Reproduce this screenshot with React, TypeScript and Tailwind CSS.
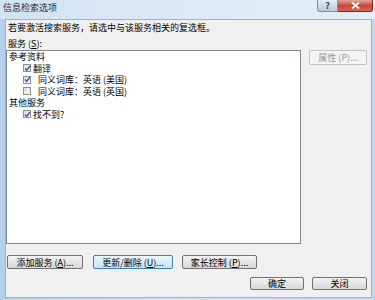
import React from "react";

const font = { fontFamily: '"Noto Sans CJK SC", "Noto Sans", sans-serif' };

function Check({ checked }: { checked: boolean }) {
  return (
    <span className="relative flex h-[8px] w-[8px] shrink-0 items-center justify-center border border-[#8f8f8f] bg-gradient-to-br from-[#dcdcdc] to-[#f7f7f7]">
      {checked && (
        <svg width="7" height="7" viewBox="0 0 7 7" className="absolute">
          <path d="M1 3.6 L2.8 5.4 L6 1" fill="none" stroke="#3a5aa5" strokeWidth="1.4" />
        </svg>
      )}
    </span>
  );
}

function Btn({
  children,
  w,
  variant = "normal",
}: {
  children: React.ReactNode;
  w: string;
  variant?: "normal" | "focus" | "disabled";
}) {
  const base = "flex h-full items-center justify-center rounded-[2px] border text-[9px] leading-none";
  const look =
    variant === "focus"
      ? "border-[#3c7fb1] bg-gradient-to-b from-[#eaf6fd] to-[#c4e5f6] text-black"
      : variant === "disabled"
      ? "border-[#c0c4c7] bg-[#f4f4f4] text-[#9a9a9a]"
      : "border-[#707070] bg-gradient-to-b from-[#f2f2f2] to-[#d8d8d8] text-black";
  return <div className={`${base} ${look} ${w}`}>{children}</div>;
}

export default function App() {
  return (
    <div
      style={font}
      className="flex h-[300px] w-[375px] flex-col overflow-hidden bg-gradient-to-r from-[#b5cfec] via-[#cfe0f3] to-[#c2d8f0]"
    >
      {/* title bar */}
      <div className="flex h-[19px] shrink-0 items-start justify-between bg-gradient-to-r from-[#d3e3f4] to-[#e4eef8]">
        <div className="pl-[3px] pt-[2px] text-[9px] leading-[11px] text-[#1c2a3c]">信息检索选项</div>
        <div className="mr-[2px] flex h-[12px]">
          <div className="flex w-[21px] items-center justify-center rounded-bl-[3px] border border-t-0 border-[#7d8ea3] bg-gradient-to-b from-[#e8eef5] to-[#b9c9dc] text-[9px] font-bold leading-none text-[#2f3d4e]">
            ?
          </div>
          <div className="flex w-[35px] items-center justify-center rounded-br-[3px] border border-l-0 border-t-0 border-[#7a2a23] bg-gradient-to-b from-[#e6a397] via-[#c8443a] to-[#d2685b]">
            <svg width="9" height="7" viewBox="0 0 9 7">
              <path d="M1 0.5 L8 6.5 M8 0.5 L1 6.5" stroke="#ffffff" strokeWidth="1.8" />
            </svg>
          </div>
        </div>
      </div>

      {/* client area */}
      <div className="ml-[5px] mr-[3px] flex h-[279px] w-[367px] flex-col border border-[#a3b3c6] bg-[#f0f0f0]">
        <div className="mt-[2px] h-[11px] pl-[2px] text-[9px] leading-[11px] text-black">
          若要激活搜索服务，请选中与该服务相关的复选框。
        </div>
        <div className="mt-[5px] h-[11px] pl-[2px] text-[9px] leading-[11px] text-black">
          服务 (<span className="underline">S</span>):
        </div>
        <div className="mt-[1px] flex items-start">
          <div className="h-[194px] w-[295px] border border-[#828790] bg-white text-[9px] text-black">
            <div className="flex h-[11.5px] items-center pl-[2px]">参考资料</div>
            <div className="flex h-[11.5px] items-center pl-[16px]">
              <Check checked />
              <span className="ml-[2px]">翻译</span>
            </div>
            <div className="flex h-[11.5px] items-center pl-[16px]">
              <Check checked />
              <span className="ml-[7px]">同义词库：英语 (美国)</span>
            </div>
            <div className="flex h-[11.5px] items-center pl-[16px]">
              <Check checked={false} />
              <span className="ml-[7px]">同义词库：英语 (英国)</span>
            </div>
            <div className="flex h-[11.5px] items-center pl-[2px]">其他服务</div>
            <div className="flex h-[11.5px] items-center pl-[16px]">
              <Check checked />
              <span className="ml-[2px]">找不到?</span>
            </div>
          </div>
          <div className="ml-[8px] h-[15px]">
            <Btn w="w-[58px]" variant="disabled">
              属性 (P)...
            </Btn>
          </div>
        </div>
        <div className="mt-[11px] flex h-[14px] pl-[1px]">
          <Btn w="w-[76px]">
            添加服务 (<span className="underline">A</span>)...
          </Btn>
          <div className="ml-[10px] h-full">
            <Btn w="w-[80px]" variant="focus">
              更新/删除 (<span className="underline">U</span>)...
            </Btn>
          </div>
          <div className="ml-[9px] h-full">
            <Btn w="w-[75px]">
              家长控制 (<span className="underline">P</span>)...
            </Btn>
          </div>
        </div>
        <div className="mt-[8px] flex h-[13px] justify-end pr-[4px]">
          <Btn w="w-[54px]">确定</Btn>
          <div className="ml-[8px] h-full">
            <Btn w="w-[55px]">关闭</Btn>
          </div>
        </div>
      </div>
    </div>
  );
}
